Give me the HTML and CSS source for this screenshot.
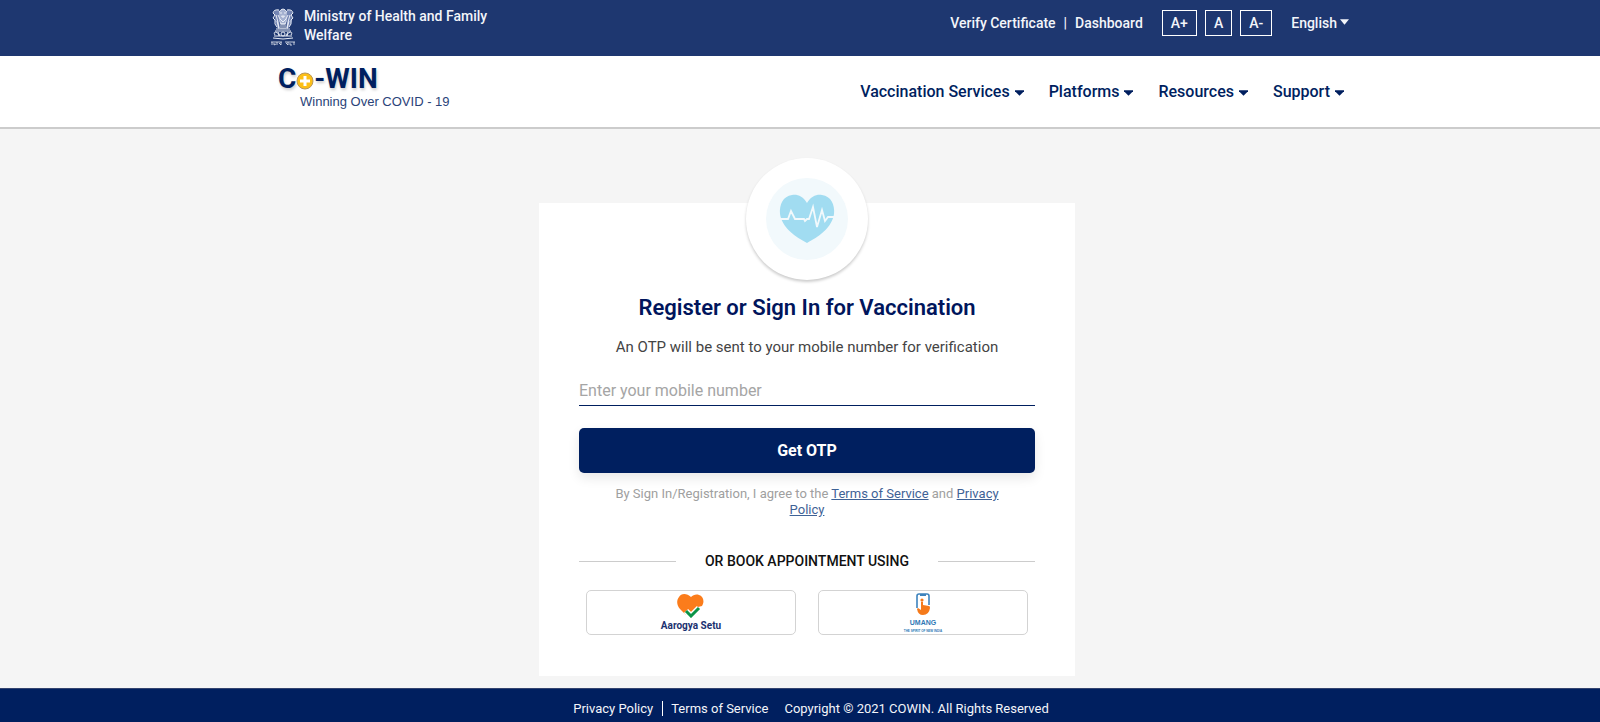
FILE: index.html
```html
<!DOCTYPE html>
<html lang="en">
<head>
<meta charset="utf-8">
<meta name="viewport" content="width=device-width, initial-scale=1">
<title>Co-WIN</title>
<link rel="stylesheet" href="styles.css">
</head>
<body>
<div class="topbar">
  <div class="container topbar-inner">
    <div class="ministry">
      <svg class="emblem" viewBox="0 0 26 40" aria-hidden="true">
        <g fill="none" stroke="#e8ecf5" stroke-width="1">
          <path d="M9 5q4-6 8 0l1 4-1 4-2 4h-4l-2-4-1-4z" fill="#a5b1d0"/>
          <path d="M4 5q1-3 5-2v7l1 11H7L5 14zM22 5q-1-3-5-2v7l-1 11h3l3-7z" fill="#7485b3" stroke="none"/>
          <path d="M9 3Q4 2 3 6l2 2-2 3 2 2 0 4 2 3M17 3q5-1 6 3l-2 2 2 3-2 2 0 4-2 3"/>
          <path d="M10 6h2M14 6h2M11 9q2 2 4 0M8 8l2 4M18 8l-2 4M13 8v3M10 12l3 3 3-3M6 8q2 6 3 13M20 8q-2 6-3 13M11 16v6M13 16v6M15 16v6M7 14l2 8M19 14l-2 8"/>
          <path d="M6 22h14M5 24h16M4 29h18M3 31q10 2 20 0"/>
          <circle cx="13" cy="27" r="2"/>
          <path d="M5 28q-2-3 1-3 3 1 3 4M21 28q2-3-1-3-3 1-3 4M8 25l2 4M18 25l-2 4"/>
          <path d="M1 35h11M15 35h10M2 35v3M4 36v2l2-1M7 35v3M9 36l2 2M11 35v3M16 36l2 2M18 35v3M20 36v2h2M24 35v3" stroke-width=".8"/>
        </g>
      </svg>
      <span class="ministry-name">Ministry of Health and Family Welfare</span>
    </div>
    <div class="tools">
      <nav class="quick" aria-label="Quick links"><a href="#">Verify Certificate</a><span>|</span><a href="#">Dashboard</a></nav>
      <div class="sizes"><button type="button">A+</button><button type="button">A</button><button type="button">A-</button></div>
      <button type="button" class="language">English<svg class="caret" viewBox="0 0 10 6" aria-hidden="true"><path d="M0 0h10L5 6z"/></svg></button>
    </div>
  </div>
</div>
<header class="header">
  <div class="container header-inner">
    <a class="brand" href="#" aria-label="Co-WIN home">
      <span class="brand-name">C<svg class="brand-o" viewBox="0 0 18 18" aria-hidden="true"><circle cx="9" cy="9" r="8" fill="#fcbf17" stroke="#b9975a"/><path d="M9 4v10M4 9h10" stroke="#fff" stroke-width="3"/></svg>-WIN</span>
      <span class="tagline">Winning Over COVID - 19</span>
    </a>
    <nav class="menu" aria-label="Main">
      <button type="button">Vaccination Services<svg class="caret" viewBox="0 0 10 6" aria-hidden="true"><path d="M0 0h10v1L5 6 0 1z"/></svg></button>
      <button type="button">Platforms<svg class="caret" viewBox="0 0 10 6" aria-hidden="true"><path d="M0 0h10v1L5 6 0 1z"/></svg></button>
      <button type="button">Resources<svg class="caret" viewBox="0 0 10 6" aria-hidden="true"><path d="M0 0h10v1L5 6 0 1z"/></svg></button>
      <button type="button">Support<svg class="caret" viewBox="0 0 10 6" aria-hidden="true"><path d="M0 0h10v1L5 6 0 1z"/></svg></button>
    </nav>
  </div>
</header>
<main class="main">
  <form class="card">
    <div class="badge">
      <svg viewBox="0 0 82 82" aria-hidden="true">
        <circle cx="41" cy="41" r="41" fill="#f2f9fc"/>
        <path d="M41 25C37 18 31 16 26 17 17 18 13 27 14 36c2 14 16 23 27 29 11-6 25-15 27-29 1-9-3-18-12-19-5-1-11 1-15 8z" fill="#a1dcf1"/>
        <path d="M14 41h8l3-8 4 8h9l1 2 2-2h2l4-12 4 20 5-17 3 11 3-4h6" fill="none" stroke="#f2f9fc" stroke-width="1.8"/>
      </svg>
    </div>
    <h1>Register or Sign In for Vaccination</h1>
    <p class="lead">An OTP will be sent to your mobile number for verification</p>
    <input class="mobile" type="tel" aria-label="Mobile number" placeholder="Enter your mobile number">
    <button type="button" class="submit">Get OTP</button>
    <p class="terms">By Sign In/Registration, I agree to the <a href="#">Terms of Service</a> and <a href="#">Privacy Policy</a></p>
    <div class="divider"><span>OR BOOK APPOINTMENT USING</span></div>
    <div class="apps">
      <button type="button" class="app">
        <svg class="setu" viewBox="0 0 28 24" aria-hidden="true">
          <path d="M14 3C10-1 4-1 2 3-1 7 0 12 3 15l6 6 1-4 4 2 7-6 4-1c3-5 1-10-3-11-3-1-6 0-8 2z" fill="#fb7c1b"/>
          <path d="M9 17l5 5 8-8" fill="none" stroke="#fff" stroke-width="6"/>
          <path d="M9 17l5 5 8-8" fill="none" stroke="#0b9447" stroke-width="3"/>
        </svg>
        <span class="setu-name">Aarogya Setu</span>
      </button>
      <button type="button" class="app">
        <svg class="phone" viewBox="0 0 14 22" aria-hidden="true">
          <path d="M1 15V3q0-2 2-2h8q2 0 2 2v9" fill="none" stroke="#3d83bd" stroke-width="1.6"/>
          <path d="M4 1h6v2H4z" fill="#3d83bd"/>
          <circle cx="6" cy="7" r="1.6" fill="#f57a1b"/>
          <path d="M5 9q1-1 2 0v3l6 1q1 0 1 2-1 7-7 7-5 0-6-6l1-1 3 2z" fill="#f57a1b"/>
        </svg>
        <span class="umang-name">UMANG</span>
        <span class="umang-tag">THE SPIRIT OF NEW INDIA</span>
      </button>
    </div>
  </form>
</main>
<footer class="footer">
  <nav aria-label="Legal"><a href="#">Privacy Policy</a><a href="#">Terms of Service</a></nav>
  <span>Copyright © 2021 COWIN. All Rights Reserved</span>
</footer>
</body>
</html>
```

FILE: styles.css
```css
* { box-sizing: border-box; }
body {
  margin: 0;
  min-height: 100vh;
  display: flex;
  flex-direction: column;
  background: #f5f5f5;
  color: #001f5f;
  font-family: Roboto, "Liberation Sans", sans-serif;
  font-size: 14px;
}
button { font: inherit; color: inherit; background: none; border: 0; padding: 0; cursor: pointer; }
a { color: inherit; text-decoration: none; }
svg { display: block; flex: none; }
.container { width: 100%; max-width: 1098px; margin: 0 auto; }
.caret { width: 9px; height: 6px; fill: currentColor; }

.topbar { background: #1e3770; color: #f3f5fa; font-weight: 500; }
.topbar-inner { display: flex; justify-content: space-between; align-items: flex-start; height: 56px; padding: 7px 0 0 19px; }
.ministry { display: flex; gap: 8px; }
.emblem { width: 26px; height: 40px; }
.ministry-name { width: 200px; font-size: 14px; line-height: 19px; }
.tools { display: flex; align-items: center; padding-top: 3px; }
.quick { display: flex; gap: 8px; margin-right: 19px; }
.sizes { display: flex; gap: 8px; margin-right: 19px; }
.sizes button { height: 26px; padding: 0 8px; border: 1px solid #fff; }
.language { display: flex; gap: 3px; }
.language .caret { margin-top: 4px; }

.header { background: #fff; border-bottom: 2px solid #ccc; }
.header-inner { display: flex; justify-content: space-between; align-items: center; height: 71px; padding: 0 5px 0 27px; }
.brand { display: flex; flex-direction: column; align-self: flex-start; padding-top: 8px; }
.brand-name { display: flex; align-items: center; font-size: 28px; line-height: 30px; font-weight: 700; text-shadow: 1px 2px 3px #ccc; }
.brand-o { width: 18px; height: 18px; margin-top: 4px; }
.tagline { padding-left: 22px; font-family: "Liberation Sans", Arial, sans-serif; font-size: 13px; line-height: 15px; color: #2a4379; }
.menu { display: flex; gap: 25px; font-size: 16px; font-weight: 500; }
.menu button { display: flex; align-items: center; gap: 5px; }
.menu .caret { margin-top: 2px; }

.main { flex: 1; display: flex; justify-content: center; align-items: flex-start; padding: 74px 0 12px 14px; }
.card { width: 536px; max-width: 100%; background: #fff; padding: 0 40px 41px; display: flex; flex-direction: column; }
.badge { width: 122px; height: 122px; margin: -45px auto 0; display: grid; place-items: center; border-radius: 50%; background: #fff; box-shadow: 0 2px 3px #ccc; }
.badge svg { width: 82px; height: 82px; }
h1 { margin: 14px 0 0; font-size: 22px; line-height: 28px; font-weight: 600; color: #00155c; text-align: center; }
.lead { margin: 15px 0 0; font-size: 15px; line-height: 20px; color: #444; text-align: center; }
.mobile { width: 100%; height: 31px; margin-top: 18px; padding: 0; border: 0; border-bottom: 1px solid #001f5f; background: none; outline: 0; font: 400 16px Roboto, sans-serif; }
.mobile::placeholder { color: #a5a5a5; }
.submit { height: 45px; margin-top: 22px; border-radius: 5px; background: #001f5f; color: #fff; font-size: 16px; font-weight: 700; box-shadow: 0 5px 12px #e8e8e8; }
.terms { margin: 13px 20px 0; font-size: 13px; line-height: 16px; color: #a0a0a0; text-align: center; }
.terms a { color: #3f6296; text-decoration: underline; }
.divider { display: flex; align-items: center; gap: 29px; margin-top: 33px; line-height: 20px; font-weight: 500; color: #111; }
.divider::before, .divider::after { content: ""; flex: 1; height: 1px; background: #ccc; }
.apps { display: grid; grid-template-columns: 1fr 1fr; gap: 22px; margin: 19px 7px 0; }
.app { display: flex; flex-direction: column; align-items: center; height: 45px; border: 1px solid #d3d3d3; border-radius: 5px; }
.setu { width: 28px; height: 24px; margin-top: 3px; }
.setu-name { font-size: 10px; line-height: 12px; font-weight: 700; margin-top: 2px; color: #1b3170; }
.phone { width: 14px; height: 22px; margin-top: 2px; }
.umang-name { margin-top: 4px; font-family: "Liberation Sans", sans-serif; font-size: 7px; line-height: 8px; font-weight: 700; color: #2f78b5; }
.umang-tag { margin-top: 2px; font-family: "Liberation Sans", sans-serif; font-size: 3px; line-height: 4px; font-weight: 700; color: #2f78b5; }

.footer { display: flex; justify-content: center; align-items: center; gap: 16px; height: 34px; padding: 6px 0 0 22px; border-top: 1px solid #33446f; background: #001f5f; color: #f3f5fa; font-size: 13px; }
.footer nav { display: flex; }
.footer nav a + a { margin-left: 9px; padding-left: 8px; border-left: 1px solid #fff; }
```
